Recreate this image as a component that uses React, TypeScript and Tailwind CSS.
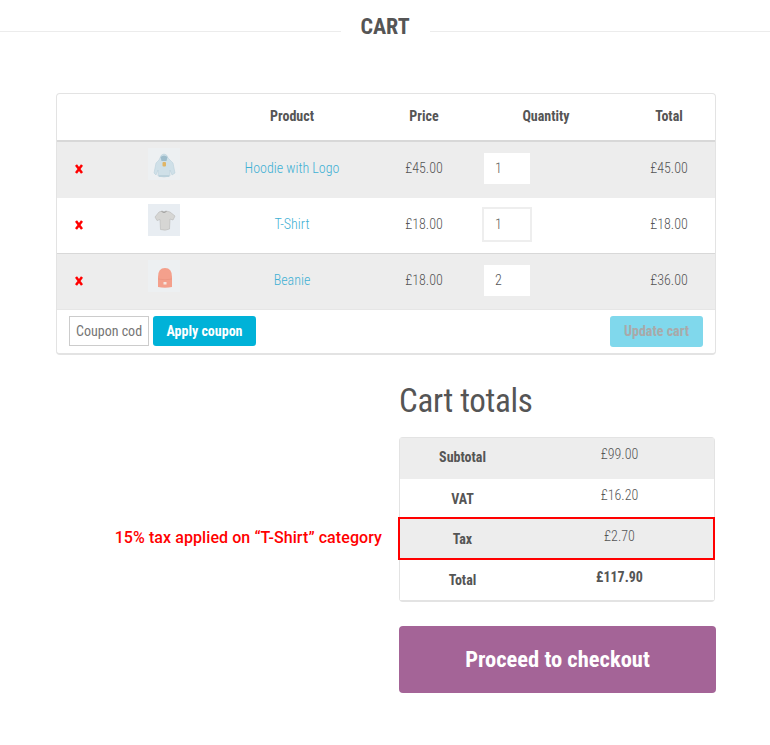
const font = "font-['Roboto_Condensed',Roboto,sans-serif]";

function Hoodie() {
  return (
    <svg width="32" height="32" viewBox="0 0 32 32">
      <rect width="32" height="32" fill="#edf0f2" />
      <path d="M12 10q1-4 4-4t4 4l2 2 3 3 2 10-3 2-2-5v6q-6 2-12 0v-6l-2 5-2-2 2-10 3-3z" fill="#cfe0e8" stroke="#b5ccd8" strokeWidth=".5" />
      <path d="M12.500 9q3.500-3 7 0l-1 4h-5z" fill="#9dbccb" />
      <rect x="14.500" y="14" width="3.500" height="4.500" rx="1" fill="#e0b565" />
      <rect x="11" y="27" width="10" height="2" fill="#bcd2dc" />
    </svg>
  );
}
function Shirt() {
  return (
    <svg width="32" height="32" viewBox="0 0 32 32">
      <rect width="32" height="32" fill="#e8edf2" />
      <path d="M11 8l3-1q2 1.500 4 0l4 1 5 4-2 4-3-1-.5 10q-4 2-9 .5l-.5-10-3 1-2-3.500z" fill="#d6d6d4" stroke="#b9b9b7" strokeWidth=".6" />
      <path d="M13.500 7.500q2.500 2 5 0" stroke="#8f8f8f" strokeWidth=".8" fill="none" />
    </svg>
  );
}
function Beanie() {
  return (
    <svg width="32" height="32" viewBox="0 0 32 32">
      <rect width="32" height="32" fill="#edf0f2" />
      <path d="M10 17q0-9 7-9t7 9v10q-7 1.500-14 0z" fill="#f4a08c" />
      <path d="M10 19q7 1.500 14 0" stroke="#e48c78" strokeWidth=".5" fill="none" />
      <rect x="15.500" y="22" width="3" height="2.500" fill="#f5e6df" />
    </svg>
  );
}

function X() {
  return (
    <svg width="8" height="10" viewBox="0 0 8 10" className="mt-px">
      <path d="M1 1l6 8M7 1l-6 8" stroke="#ff0000" strokeWidth="2.500" />
    </svg>
  );
}

const cols = "grid grid-cols-[66px_82px_174px_90px_154px_92px] items-center";

function Row({ icon, name, price, qty, total, alt, focused, tall, pad }: any) {
  return (
    <div className={`${cols} ${tall} ${pad} ${alt ? "bg-[#ededed]" : "bg-white"} font-light`}>
      <div className="pl-[18px] flex items-center"><X /></div>
      <div className="flex justify-center self-start mt-[6px]">{icon}</div>
      <a className="text-center text-[#3fb0d4]">{name}</a>
      <div className="text-center">{price}</div>
      <div className={focused ? "pl-[13px]" : "pl-[15px]"}>
        <div className={`bg-white flex items-center ${focused ? "w-[50px] h-[35px] border-2 border-[#eeeeee] pl-[11px]" : "w-[46px] h-[31px] pl-[11px]"}`}>{qty}</div>
      </div>
      <div className="text-center">{total}</div>
    </div>
  );
}

export default function App() {
  return (
    <div className={`${font} w-[770px] h-[745px] bg-white text-[14px] text-[#555555] overflow-hidden`}>
      <div className="flex items-center h-[53px] pb-[1px]">
        <div className="flex-1 h-px bg-[#ececec] mt-[10px]" />
        <h1 className="w-[89px] text-center text-[22px] font-bold text-[#555555] leading-none pt-[2px]">CART</h1>
        <div className="flex-1 h-px bg-[#ececec] mt-[10px]" />
      </div>

      <div className="mt-[40px] ml-[56px] w-[660px] border border-[#e3e3e3] border-b-2 rounded-[4px] overflow-hidden">
        <div className={`${cols} h-[48px] border-b-2 border-[#d8d8d8] font-bold pb-px`}>
          <div /><div />
          <div className="text-center">Product</div>
          <div className="text-center">Price</div>
          <div className="text-center">Quantity</div>
          <div className="text-center">Total</div>
        </div>
        <Row icon={<Hoodie />} name="Hoodie with Logo" price="£45.00" qty="1" total="£45.00" alt tall="h-[56px]" pad="pb-[3px]" />
        <Row icon={<Shirt />} name="T-Shirt" price="£18.00" qty="1" total="£18.00" focused tall="h-[55px]" pad="pb-[3px]" />
        <div className="h-[1px] bg-[#d8d8d8]" />
        <Row icon={<Beanie />} name="Beanie" price="£18.00" qty="2" total="£36.00" alt tall="h-[55px]" pad="pb-[2px]" />
        <div className="flex items-start h-[44px] pt-[6px] pl-[12px] pr-[12px] border-t border-[#e6e6e6]">
          <div className="w-[80px] h-[30px] border border-[#cccccc] flex items-center pl-[6px] text-[#757575] overflow-hidden whitespace-nowrap text-[14px]">Coupon cod</div>
          <button className="ml-[4px] w-[103px] h-[30px] rounded-[3px] bg-[#00b2d8] text-white font-bold">Apply coupon</button>
          <button className="ml-auto w-[93px] h-[31px] rounded-[3px] bg-[#80d8ec] text-[#a9a9a9] font-bold">Update cart</button>
        </div>
      </div>

      <div className="flex mt-[22px]">
        <div className="w-[399px] shrink-0 pt-[149px] pr-[17px] text-right text-[#ff0000] font-medium text-[16px] tracking-[0.08px] leading-[24px] font-['Roboto',sans-serif]">
          15% tax applied on “T-Shirt” category
        </div>
        <div className="w-[317px]">
          <h2 className="text-[33px] tracking-[-0.3px] leading-[48px] h-[60px]">Cart totals</h2>
          <div className="relative w-[316px] border border-[#e3e3e3] border-b-2 rounded-[4px]">
            {[
              ["Subtotal", "£99.00", true, false, "h-[41px]", "pt-[9px]", "pt-[6px]"],
              ["VAT", "£16.20", false, false, "h-[40px]", "pt-[10px]", "pt-[6px]"],
              ["Tax", "£2.70", true, false, "h-[41px]", "pt-[10px]", "pt-[7px]"],
              ["Total", "£117.90", false, true, "h-[40px]", "pt-[10px]", "pt-[7px]"],
            ].map(([l, v, alt, strong, h, p, q]: any) => (
              <div key={l} className={`grid grid-cols-[125px_189px] ${h} ${alt ? "bg-[#ededed]" : "bg-white"}`}>
                <div className={`text-center font-bold ${p}`}>{l}</div>
                <div className={`text-center ${q} ${strong ? "font-bold" : "font-light"}`}>{v}</div>
              </div>
            ))}
            <div className="absolute left-[-2px] top-[79px] w-[317px] h-[43px] border-2 border-[#ff0000]" />
          </div>
          <button className="mt-[24px] w-[317px] h-[67px] rounded-[4px] bg-[#a46497] text-white font-bold text-[22.5px] pt-[1px]">Proceed to checkout</button>
        </div>
      </div>
    </div>
  );
}
